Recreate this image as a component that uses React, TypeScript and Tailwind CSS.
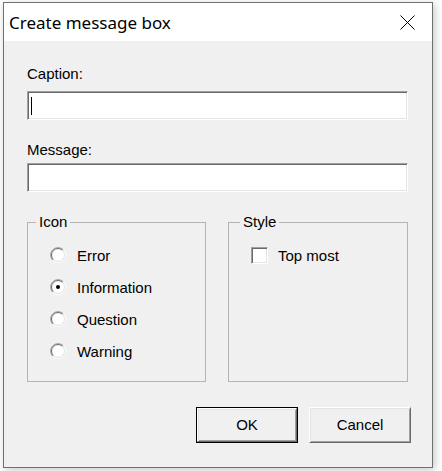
import type { ReactNode } from "react";

const ui = "font-['Liberation_Sans',Arial,sans-serif] text-[15px] text-black";

function Radio({ checked }: { checked?: boolean }) {
    return (
        <svg width="16" height="16" viewBox="0 0 16 16" className="shrink-0">
            <circle cx="8" cy="8" r="6.5" fill="#ffffff" />
            <path d="M2.697 13.303A7.5 7.5 0 0 1 13.303 2.697" fill="none" stroke="#a0a0a0" strokeWidth="1" />
            <path d="M13.303 2.697A7.5 7.5 0 0 1 2.697 13.303" fill="none" stroke="#ffffff" strokeWidth="1" />
            <path d="M3.404 12.596A6.5 6.5 0 0 1 12.596 3.404" fill="none" stroke="#696969" strokeWidth="1" />
            <path d="M12.596 3.404A6.5 6.5 0 0 1 3.404 12.596" fill="none" stroke="#e3e3e3" strokeWidth="1" />
            {checked && <circle cx="8" cy="8" r="2" fill="#000000" />}
        </svg>
    );
}

function GroupBox({ title, width, offset, children }: { title: string; width: string; offset: string; children: ReactNode }) {
    return (
        <fieldset className={`${width} h-[168px] border border-[#b4b4b4] rounded-none`}>
            <legend className={`${offset} px-[3px] leading-[16px]`}>{title}</legend>
            <div className="mt-[9px]">{children}</div>
        </fieldset>
    );
}

function TextBox({ caret }: { caret?: boolean }) {
    return (
        <div className="h-[29px] w-full flex items-center bg-white border border-t-[#a0a0a0] border-l-[#a0a0a0] border-r-white border-b-white shadow-[inset_1px_1px_0_#696969,inset_-1px_-1px_0_#e3e3e3] pl-[3px]">
            {caret && <div className="w-[1px] h-[18px] bg-black" />}
        </div>
    );
}

export default function App() {
    const icons = ["Error", "Information", "Question", "Warning"];

    return (
        <div className={`w-[442px] h-[471px] bg-white pl-[3px] pt-[2px] ${ui}`}>
            <div className="w-[430px] h-[466px] border border-[#707070] flex flex-col shadow-[2px_2px_8px_rgba(0,0,0,0.22)]">
                {/* title bar */}
                <div className="h-[38px] bg-white flex items-center pl-[5px] shrink-0">
                    <span className="font-['Noto_Sans',sans-serif] text-[17px] text-black leading-none">
                        Create message box
                    </span>
                    <svg width="15" height="15" viewBox="0 0 15 15" className="ml-auto mr-[17px]">
                        <path d="M0.5 0.5L14.5 14.5M14.5 0.5L0.5 14.5" stroke="#000000" strokeWidth="1" />
                    </svg>
                </div>

                <div className="flex-1 bg-[#f0f0f0] pl-[23px] pr-[24px] pt-[24px]">
                    <div className="leading-[17px]">Caption:</div>
                    <div className="mt-[9px]">
                        <TextBox caret />
                    </div>
                    <div className="leading-[17px] mt-[21px]">Message:</div>
                    <div className="mt-[5px]">
                        <TextBox />
                    </div>

                    <div className="flex justify-between mt-[22px]">
                        <GroupBox title="Icon" width="w-[179px]" offset="ml-[8px]">
                            <div className="flex flex-col pl-[22px]">
                                {icons.map((name) => (
                                    <div key={name} className="h-[32px] flex items-center gap-[11px]">
                                        <Radio checked={name === "Information"} />
                                        <span className="leading-[17px]">{name}</span>
                                    </div>
                                ))}
                            </div>
                        </GroupBox>
                        <GroupBox title="Style" width="w-[180px]" offset="ml-[11px]">
                            <div className="pl-[22px] h-[32px] flex items-center gap-[10px]">
                                <div className="w-[17px] h-[17px] bg-white border border-t-[#a0a0a0] border-l-[#a0a0a0] border-r-white border-b-white shadow-[inset_1px_1px_0_#696969,inset_-1px_-1px_0_#e3e3e3]" />
                                <span className="leading-[17px]">Top most</span>
                            </div>
                        </GroupBox>
                    </div>

                    <div className="flex justify-end gap-[11px] mt-[25px] mr-[-3px]">
                        <div className="w-[102px] h-[36px] border border-black">
                            <div className="w-full h-full flex items-center justify-center bg-[#f0f0f0] border border-t-white border-l-white border-r-[#696969] border-b-[#696969] shadow-[inset_1px_1px_0_#e3e3e3,inset_-1px_-1px_0_#a0a0a0]">
                                OK
                            </div>
                        </div>
                        <div className="w-[102px] h-[36px] flex items-center justify-center bg-[#f0f0f0] border border-t-white border-l-white border-r-[#696969] border-b-[#696969] shadow-[inset_1px_1px_0_#e3e3e3,inset_-1px_-1px_0_#a0a0a0]">
                            Cancel
                        </div>
                    </div>
                </div>
            </div>
        </div>
    );
}
